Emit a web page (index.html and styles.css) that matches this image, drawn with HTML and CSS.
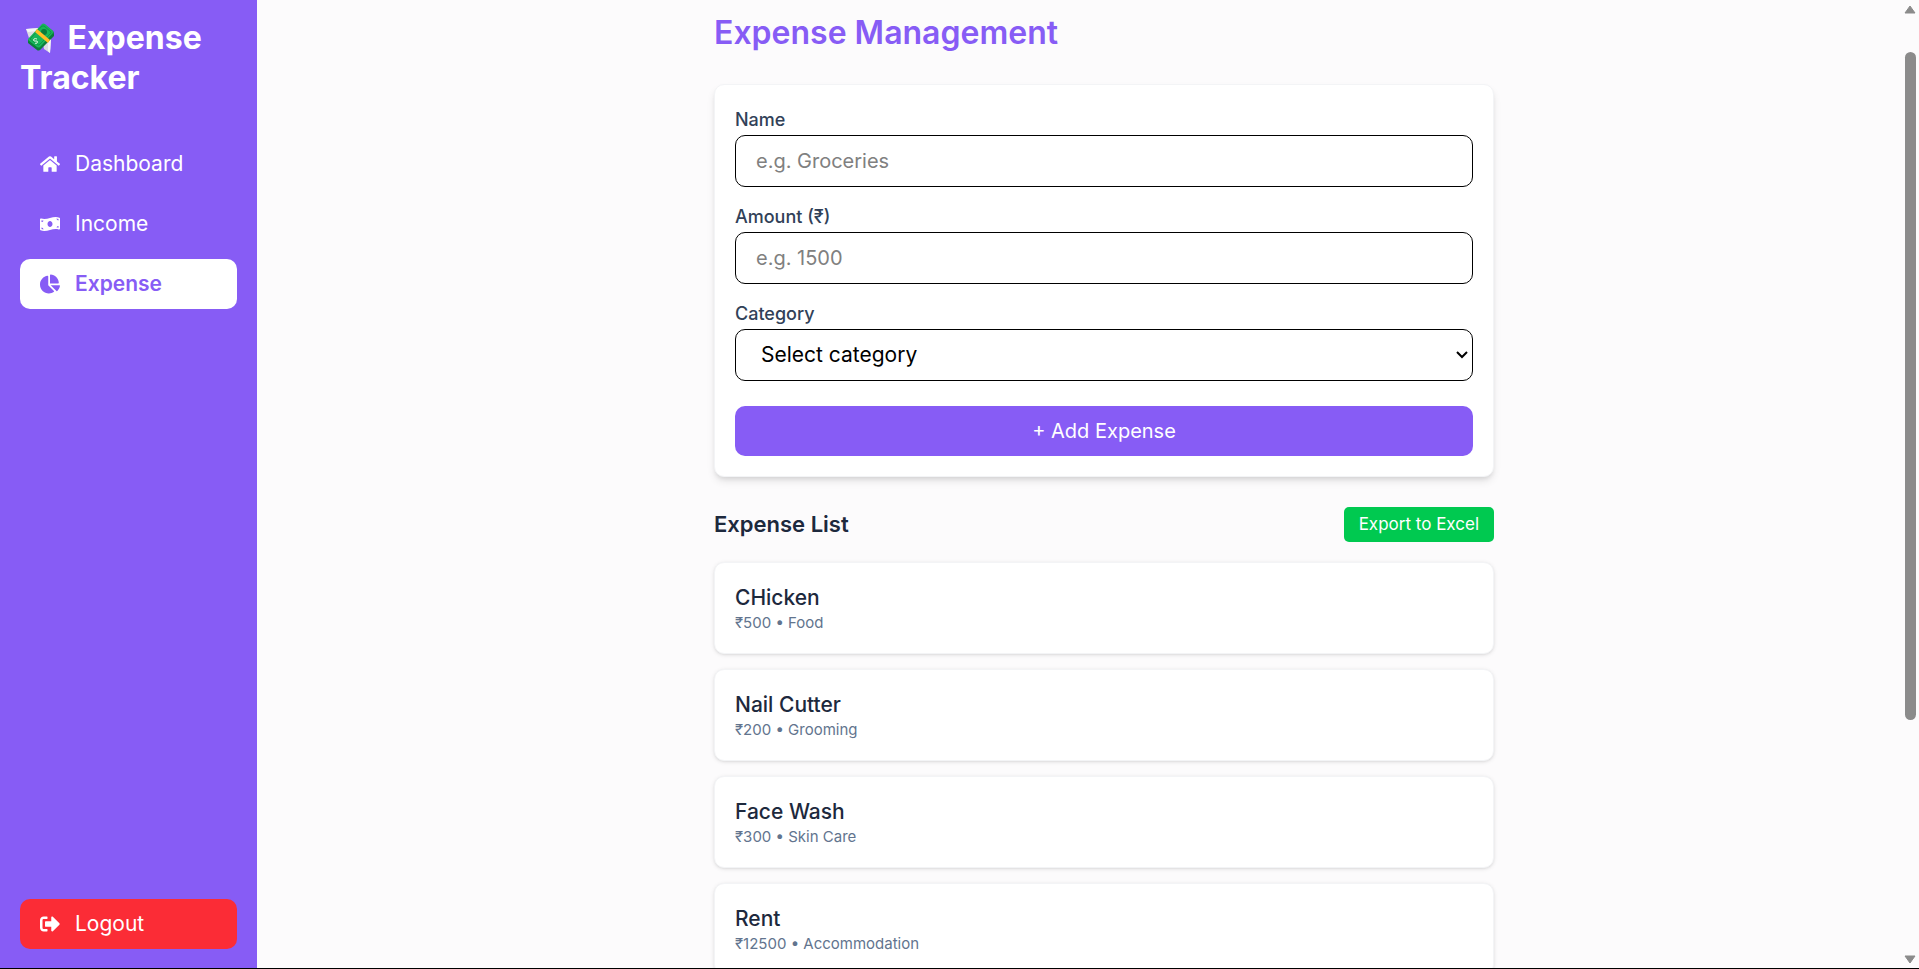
FILE: index.html
```html
<!DOCTYPE html>
<html lang="en">
<head>
<meta charset="utf-8">
<meta name="viewport" content="width=device-width, initial-scale=1">
<title>Expense Tracker</title>
<link rel="stylesheet" href="styles.css">
</head>
<body>
<div class="app">
  <aside class="sidebar">
    <h1 class="brand"><svg class="brand-icon" viewBox="0 0 40 34" aria-hidden="true">
      <path d="M6 6l13-1-5 8-5 2z" fill="#dcdce4"/><path d="M6 6l13-1-2 3-9 1z" fill="#f5f5f8"/>
      <path d="M31 16l-1 14-6-4-1-5z" fill="#dcdce4"/><path d="M31 16l-1 14-2-2 0-10z" fill="#f3f3f6"/>
      <path d="M8 17L22 2q1-1 3 0l8 6q1 1 1 3v2L20 27q-2 1-3 0L8 20z" fill="#0b7d3b"/>
      <path d="M8 16L22 1q1-1 3 0l8 7q1 1 0 2L20 24q-1 1-3 0l-9-7z" fill="#18b65a"/>
      <path d="M10 16L22 3h2l7 6v1L19 22h-1z" fill="none" stroke="#0f9648"/>
      <ellipse cx="24" cy="9" rx="3" ry="3" fill="#087c3c"/>
      <path d="M15 9l2-3 13 11-2 3z" fill="#ffbd27"/>
      <path d="M17 16q-2-1-3 0t0 2l3 0q1 1 0 2t-2 0" fill="none" stroke="#d8f5de"/>
    </svg> Expense Tracker</h1>
    <nav class="nav">
      <a class="nav-link" href="#dashboard"><svg class="icon" viewBox="0 0 576 512" aria-hidden="true"><path d="M280.37 148.26L96 300.11V464a16 16 0 0 0 16 16l112.06-.29a16 16 0 0 0 15.92-16V368a16 16 0 0 1 16-16h64a16 16 0 0 1 16 16v95.64a16 16 0 0 0 16 16.05L464 480a16 16 0 0 0 16-16V300L295.67 148.26a12.19 12.19 0 0 0-15.3 0zM571.6 251.47L488 182.56V44.05a12 12 0 0 0-12-12h-56a12 12 0 0 0-12 12v72.61L318.47 43a48 48 0 0 0-61 0L4.34 251.47a12 12 0 0 0-1.6 16.9l25.5 31A12 12 0 0 0 45.15 301l235.22-193.74a12.19 12.19 0 0 1 15.3 0L530.9 301a12 12 0 0 0 16.9-1.6l25.5-31a12 12 0 0 0-1.7-16.93z"/></svg>Dashboard</a>
      <a class="nav-link" href="#income"><svg class="icon" viewBox="0 0 640 512" aria-hidden="true"><path d="M621.16 54.46C582.37 38.19 543.55 32 504.75 32c-123.17-.01-246.33 62.34-369.5 62.34-30.89 0-61.76-3.92-92.65-13.72-3.47-1.1-6.95-1.62-10.35-1.62C15.04 79 0 92.32 0 110.81v317.26c0 12.63 7.23 24.6 18.84 29.46C57.63 473.81 96.45 480 135.25 480c123.17 0 246.34-62.35 369.51-62.35 30.89 0 61.76 3.92 92.65 13.72 3.47 1.1 6.95 1.62 10.35 1.62 17.21 0 32.25-13.32 32.25-31.81V83.93c-.01-12.64-7.24-24.6-18.85-29.47zM48 132.22c20.12 5.04 41.12 7.57 62.72 8.93C104.84 170.54 79 192.69 48 192.69v-60.47zm0 285v-47.78c34.37 0 62.18 27.27 63.71 61.4-22.53-1.81-43.59-6.31-63.71-13.62zM320 352c-44.19 0-80-42.99-80-96 0-53.02 35.82-96 80-96s80 42.98 80 96c0 53.03-35.83 96-80 96zM592 379.78c-20.13-5.04-41.13-7.57-62.72-8.93 5.88-29.39 31.72-51.54 62.72-51.54v60.47zm0-237.22c-34.37 0-62.18-27.27-63.71-61.4 22.53 1.81 43.59 6.31 63.71 13.62v47.78z"/></svg>Income</a>
      <a class="nav-link active" href="#expense" aria-current="page"><svg class="icon" viewBox="0 0 544 512" aria-hidden="true"><path d="M527.79 288H290.5l158.03 158.03c6.04 6.04 15.98 6.53 22.19.68 38.7-36.46 65.32-85.61 73.13-140.86 1.34-9.46-6.51-17.85-16.06-17.85zm-15.83-64.8C503.72 103.74 408.26 8.28 288.8.04 279.68-.59 272 7.1 272 16.24V240h223.77c9.14 0 16.82-7.68 16.19-16.8zM224 288V50.71c0-9.55-8.39-17.4-17.84-16.06C86.99 51.49-4.1 155.6.14 280.37 4.5 408.51 114.83 513.59 243.03 511.98c50.4-.63 96.97-16.87 135.26-44.03 7.9-5.6 8.42-17.23 1.57-24.08L224 288z"/></svg>Expense</a>
    </nav>
    <button class="nav-link logout" type="button"><svg class="icon" viewBox="0 0 512 512" aria-hidden="true"><path d="M497 273L329 441c-15 15-41 4.5-41-17v-96H152c-13.3 0-24-10.7-24-24v-96c0-13.3 10.7-24 24-24h136V88c0-21.4 25.9-32 41-17l168 168c9.3 9.4 9.3 24.6 0 34zM192 436v-40c0-6.6-5.4-12-12-12H96c-17.7 0-32-14.3-32-32V160c0-17.7 14.3-32 32-32h84c6.6 0 12-5.4 12-12V76c0-6.6-5.4-12-12-12H96c-53 0-96 43-96 96v192c0 53 43 96 96 96h84c6.6 0 12-5.4 12-12z"/></svg>Logout</button>
  </aside>
  <main class="main">
    <div class="content">
      <h2 class="page-title">Expense Management</h2>
      <form class="form-card">
        <div class="field">
          <label class="label" for="name">Name</label>
          <input class="control" id="name" type="text" placeholder="e.g. Groceries">
        </div>
        <div class="field">
          <label class="label" for="amount">Amount (₹)</label>
          <input class="control" id="amount" type="text" inputmode="numeric" placeholder="e.g. 1500">
        </div>
        <div class="field">
          <label class="label" for="category">Category</label>
          <select class="control select" id="category"><option>Select category</option><option>Food</option><option>Grooming</option><option>Skin Care</option><option>Accommodation</option></select>
        </div>
        <button class="submit" type="button">+ Add Expense</button>
      </form>
      <div class="list-head">
        <h3 class="list-title">Expense List</h3>
        <button class="export" type="button">Export to Excel</button>
      </div>
      <ul class="list">
        <li class="item"><p class="item-name">CHicken</p><p class="item-meta">₹500 • Food</p></li>
        <li class="item"><p class="item-name">Nail Cutter</p><p class="item-meta">₹200 • Grooming</p></li>
        <li class="item"><p class="item-name">Face Wash</p><p class="item-meta">₹300 • Skin Care</p></li>
        <li class="item"><p class="item-name">Rent</p><p class="item-meta">₹12500 • Accommodation</p></li>
      </ul>
    </div>
  </main>
  <div class="scrollbar" aria-hidden="true">
    <svg class="arrow" viewBox="0 0 12 9"><path d="M6 1L11 8H1z"/></svg>
    <div class="track"><div class="thumb"></div></div>
    <svg class="arrow" viewBox="0 0 12 9"><path d="M6 8L1 1h10z"/></svg>
  </div>
</div>
</body>
</html>
```
FILE: styles.css
```css
* { box-sizing: border-box; margin: 0; padding: 0; }
body {
  font-family: Inter, "Noto Sans", sans-serif;
  font-size: 20px;
  line-height: 30px;
  background: #fcfbfc;
  color: #1d293d;
}
button, input, select { font: inherit; }
button { border: 0; cursor: pointer; }
.app {
  display: flex;
  height: 100vh;
  overflow: hidden;
  border-bottom: 1px solid #000;
}
.sidebar {
  flex: 0 0 257px;
  display: flex;
  flex-direction: column;
  padding: 18px 20px 19px;
  background: #875cf5;
  color: #fff;
}
.brand { font-size: 32px; line-height: 40px; font-weight: 700; margin-bottom: 41px; }
.brand-icon { width: 40px; height: 34px; vertical-align: middle; }
.nav { flex: 1; display: flex; flex-direction: column; gap: 10px; }
.nav-link {
  display: flex;
  align-items: center;
  gap: 15px;
  padding: 10px 20px;
  border-radius: 10px;
  color: #fff;
  font-size: 21px;
  text-decoration: none;
}
.nav-link.active { background: #fff; color: #875cf5; font-weight: 600; }
.logout { background: #fb2c36; }
.icon { width: 20px; height: 20px; fill: currentColor; }
.main { flex: 1; min-width: 0; padding: 12px 0 0 50px; }
.content { max-width: 780px; margin: 0 auto; }
.page-title { font-size: 32px; line-height: 42px; font-weight: 600; color: #875cf5; margin-bottom: 30px; }
.form-card, .item { background: #fff; border: 1px solid #f3f4f6; border-radius: 10px; padding: 20px; }
.form-card {
  display: flex;
  flex-direction: column;
  gap: 15px;
  box-shadow: 0 5px 8px -1px #0000001a, 0 3px 5px -2px #0000001a;
}
.field { display: flex; flex-direction: column; }
.label { font-size: 18px; font-weight: 500; color: #314158; }
.control {
  width: 100%;
  height: 52px;
  padding: 10px 20px;
  border: 1px solid #000;
  border-radius: 10px;
  background: #fff;
  color: #000;
}
.control::placeholder { color: #808080; }
.select {
  appearance: none;
  padding: 0 25px;
  font-size: 21px;
  background: #fff url("data:image/svg+xml,%3Csvg xmlns='http://www.w3.org/2000/svg' width='12' height='8' viewBox='0 0 12 8'%3E%3Cpath d='M1 1l5 5 5-5' fill='none' stroke='%23000' stroke-width='2'/%3E%3C/svg%3E") no-repeat right 4px center;
}
.submit {
  margin-top: 10px;
  padding: 10px;
  border-radius: 10px;
  background: #875cf5;
  color: #fff;
}
.list-head { display: flex; align-items: center; justify-content: space-between; margin: 30px 0 20px; }
.list-title { font-size: 22px; font-weight: 600; line-height: 35px; }
.export { padding: 0 15px; line-height: 35px; border-radius: 5px; background: #00c950; color: #fff; font-size: 17px; }
.list { display: flex; flex-direction: column; gap: 15px; list-style: none; }
.item { box-shadow: 0 1px 4px #0000001a, 0 1px 3px -1px #0000001a; }
.item-name { font-size: 21px; font-weight: 500; }
.item-meta { font-size: 15px; line-height: 20px; color: #62748e; }
.scrollbar {
  flex: 0 0 18px;
  display: flex;
  flex-direction: column;
  align-items: center;
  padding: 5px 0 4px;
}
.arrow { width: 12px; height: 9px; fill: #8b8b8b; stroke: #8b8b8b; stroke-linejoin: round; }
.track { flex: 1; width: 11px; padding: 38px 0 0; }
.thumb { height: 74%; border-radius: 6px; background: #8b8b8b; }
```
